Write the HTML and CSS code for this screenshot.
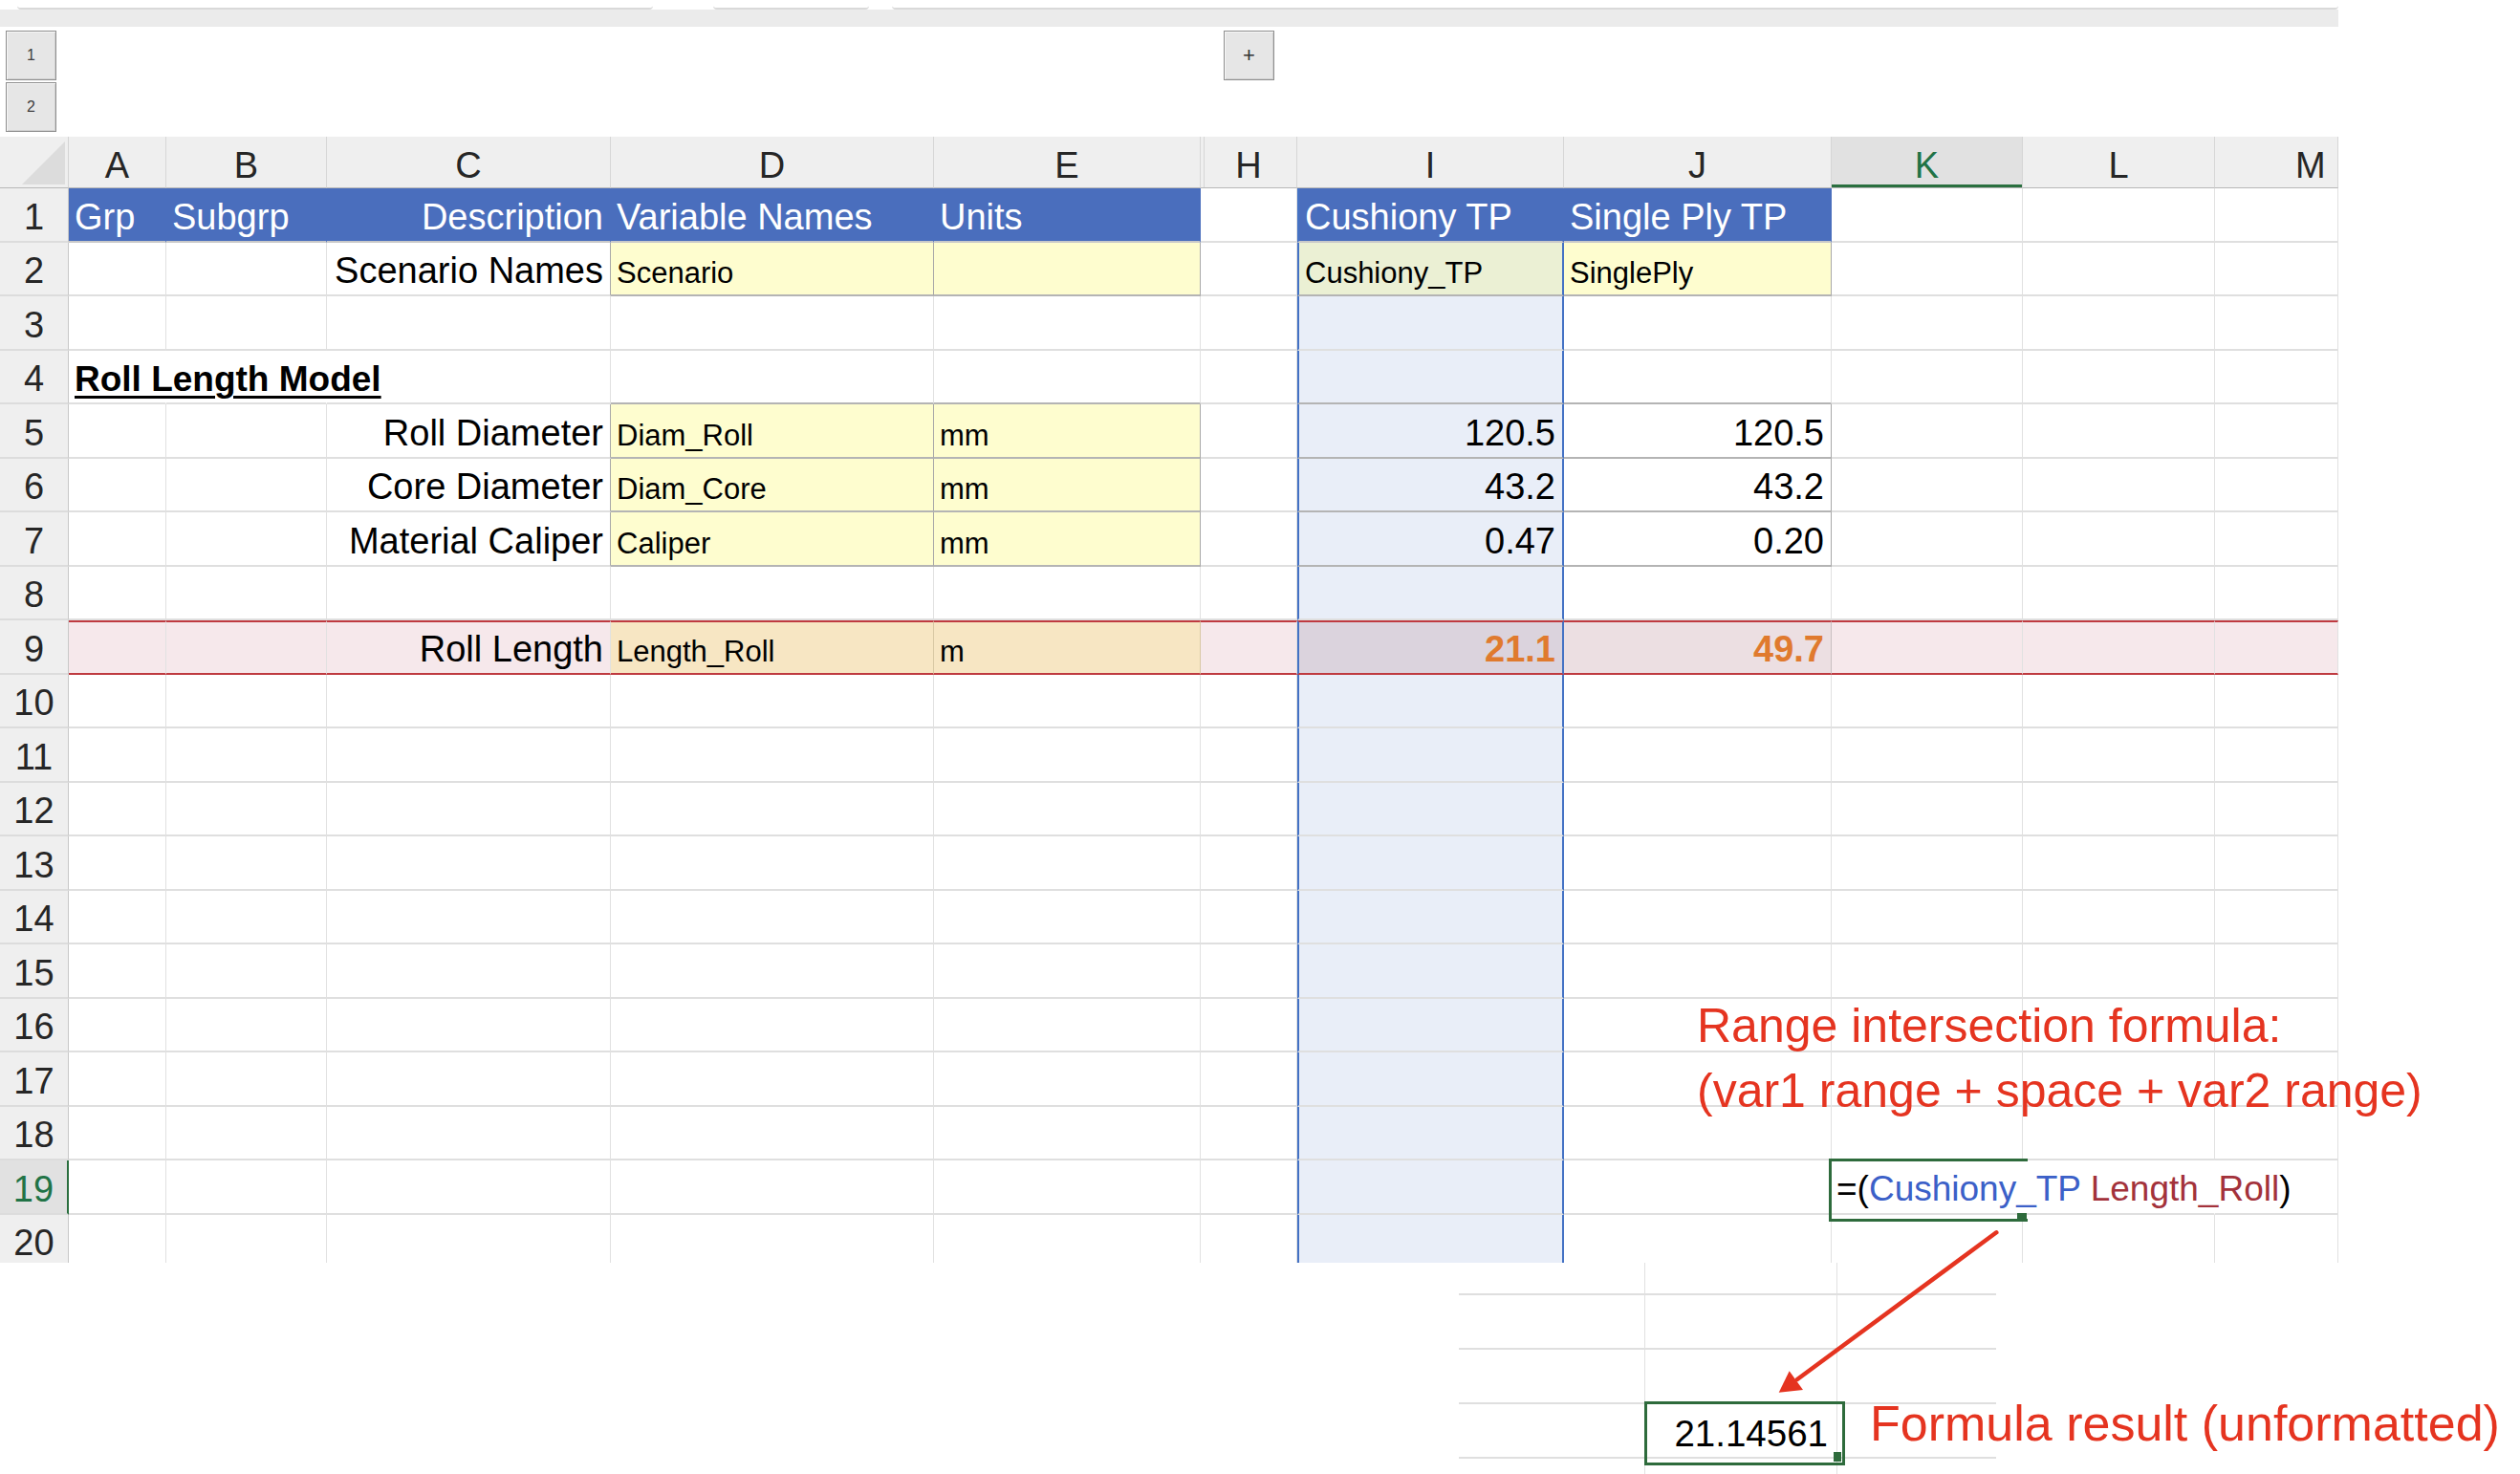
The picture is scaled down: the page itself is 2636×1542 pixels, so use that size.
FILE: index.html
```html
<!DOCTYPE html>
<html lang="en">
<head>
<meta charset="utf-8">
<title>Range intersection</title>
<link rel="stylesheet" href="styles.css">
</head>
<body>
<div class="app">
  <div class="topstrip"><div class="seg seg-a"></div><div class="seg seg-b"></div><div class="seg seg-c"></div></div>
  <div class="band"></div>
  <div class="outline">
    <div class="levels"><div class="obtn">1</div><div class="obtn">2</div></div>
    <div class="obtn expand">+</div>
  </div>

  <div class="sheet">
    <!-- column headers -->
    <div class="corner"><svg width="72" height="53" viewBox="0 0 72 53"><polygon points="23,50 68,50 68,5" fill="#dcdcdc"/></svg></div>
    <div class="c ch">A</div><div class="c ch">B</div><div class="c ch">C</div><div class="c ch">D</div><div class="c ch">E</div><div class="c ch chh">H</div><div class="c ch">I</div><div class="c ch">J</div><div class="c ch on">K</div><div class="c ch">L</div><div class="c ch chm">M</div>

    <!-- row 1 -->
    <div class="c rh">1</div>
    <div class="c hdr">Grp</div><div class="c hdr">Subgrp</div><div class="c hdr rt">Description</div><div class="c hdr">Variable Names</div><div class="c hdr hdr-end">Units</div>
    <div class="c"></div><div class="c ref hdr">Cushiony TP</div><div class="c hdr hdr-end">Single Ply TP</div><div class="c"></div><div class="c"></div><div class="c"></div>

    <!-- row 2 -->
    <div class="c rh">2</div>
    <div class="c"></div><div class="c"></div><div class="c rt bxl">Scenario Names</div><div class="c sm yel bx">Scenario</div><div class="c sm yel bx"></div>
    <div class="c"></div><div class="c sm bx ref yref">Cushiony_TP</div><div class="c sm yel bx">SinglePly</div><div class="c"></div><div class="c"></div><div class="c"></div>

    <!-- row 3 -->
    <div class="c rh">3</div>
    <div class="c"></div><div class="c"></div><div class="c"></div><div class="c"></div><div class="c"></div>
    <div class="c"></div><div class="c ref"></div><div class="c"></div><div class="c"></div><div class="c"></div><div class="c"></div>

    <!-- row 4 -->
    <div class="c rh">4</div>
    <div class="c nr"><span class="title">Roll Length Model</span></div><div class="c nr"></div><div class="c"></div><div class="c bxt"></div><div class="c bxt"></div>
    <div class="c"></div><div class="c ref bxt"></div><div class="c bxt"></div><div class="c"></div><div class="c"></div><div class="c"></div>

    <!-- row 5 -->
    <div class="c rh">5</div>
    <div class="c"></div><div class="c"></div><div class="c rt bxl">Roll Diameter</div><div class="c sm yel bx">Diam_Roll</div><div class="c sm yel bx">mm</div>
    <div class="c"></div><div class="c rt bx ref">120.5</div><div class="c rt bx">120.5</div><div class="c"></div><div class="c"></div><div class="c"></div>

    <!-- row 6 -->
    <div class="c rh">6</div>
    <div class="c"></div><div class="c"></div><div class="c rt bxl">Core Diameter</div><div class="c sm yel bx">Diam_Core</div><div class="c sm yel bx">mm</div>
    <div class="c"></div><div class="c rt bx ref">43.2</div><div class="c rt bx">43.2</div><div class="c"></div><div class="c"></div><div class="c"></div>

    <!-- row 7 -->
    <div class="c rh">7</div>
    <div class="c"></div><div class="c"></div><div class="c rt bxl">Material Caliper</div><div class="c sm yel bx">Caliper</div><div class="c sm yel bx">mm</div>
    <div class="c"></div><div class="c rt bx ref">0.47</div><div class="c rt bx">0.20</div><div class="c"></div><div class="c"></div><div class="c"></div>

    <!-- row 8 -->
    <div class="c rh">8</div>
    <div class="c"></div><div class="c"></div><div class="c"></div><div class="c"></div><div class="c"></div>
    <div class="c"></div><div class="c ref"></div><div class="c"></div><div class="c"></div><div class="c"></div><div class="c"></div>

    <!-- row 9 -->
    <div class="c rh">9</div>
    <div class="c r9"></div><div class="c r9"></div><div class="c rt r9">Roll Length</div><div class="c sm r9 peach">Length_Roll</div><div class="c sm r9 peach">m</div>
    <div class="c r9"></div><div class="c rt org ref r9 i9">21.1</div><div class="c rt org r9 j9">49.7</div><div class="c r9"></div><div class="c r9"></div><div class="c r9"></div>

    <!-- row 10 -->
    <div class="c rh">10</div>
    <div class="c"></div><div class="c"></div><div class="c"></div><div class="c"></div><div class="c"></div>
    <div class="c"></div><div class="c ref"></div><div class="c"></div><div class="c"></div><div class="c"></div><div class="c"></div>

    <!-- row 11 -->
    <div class="c rh">11</div>
    <div class="c"></div><div class="c"></div><div class="c"></div><div class="c"></div><div class="c"></div>
    <div class="c"></div><div class="c ref"></div><div class="c"></div><div class="c"></div><div class="c"></div><div class="c"></div>

    <!-- row 12 -->
    <div class="c rh">12</div>
    <div class="c"></div><div class="c"></div><div class="c"></div><div class="c"></div><div class="c"></div>
    <div class="c"></div><div class="c ref"></div><div class="c"></div><div class="c"></div><div class="c"></div><div class="c"></div>

    <!-- row 13 -->
    <div class="c rh">13</div>
    <div class="c"></div><div class="c"></div><div class="c"></div><div class="c"></div><div class="c"></div>
    <div class="c"></div><div class="c ref"></div><div class="c"></div><div class="c"></div><div class="c"></div><div class="c"></div>

    <!-- row 14 -->
    <div class="c rh">14</div>
    <div class="c"></div><div class="c"></div><div class="c"></div><div class="c"></div><div class="c"></div>
    <div class="c"></div><div class="c ref"></div><div class="c"></div><div class="c"></div><div class="c"></div><div class="c"></div>

    <!-- row 15 -->
    <div class="c rh">15</div>
    <div class="c"></div><div class="c"></div><div class="c"></div><div class="c"></div><div class="c"></div>
    <div class="c"></div><div class="c ref"></div><div class="c"></div><div class="c"></div><div class="c"></div><div class="c"></div>

    <!-- row 16 -->
    <div class="c rh">16</div>
    <div class="c"></div><div class="c"></div><div class="c"></div><div class="c"></div><div class="c"></div>
    <div class="c"></div><div class="c ref"></div><div class="c"></div><div class="c"></div><div class="c"></div><div class="c"></div>

    <!-- row 17 -->
    <div class="c rh">17</div>
    <div class="c"></div><div class="c"></div><div class="c"></div><div class="c"></div><div class="c"></div>
    <div class="c"></div><div class="c ref"></div><div class="c"></div><div class="c"></div><div class="c"></div><div class="c"></div>

    <!-- row 18 -->
    <div class="c rh">18</div>
    <div class="c"></div><div class="c"></div><div class="c"></div><div class="c"></div><div class="c"></div>
    <div class="c"></div><div class="c ref"></div><div class="c"></div><div class="c"></div><div class="c"></div><div class="c"></div>

    <!-- row 19 -->
    <div class="c rh on">19</div>
    <div class="c"></div><div class="c"></div><div class="c"></div><div class="c"></div><div class="c"></div>
    <div class="c"></div><div class="c ref"></div><div class="c"></div>
    <div class="c nr active"><span class="formula">=(<span class="f-blue">Cushiony_TP</span> <span class="f-red">Length_Roll</span>)</span></div><div class="c nr"></div><div class="c"></div>

    <!-- row 20 -->
    <div class="c rh">20</div>
    <div class="c"></div><div class="c"></div><div class="c"></div><div class="c"></div><div class="c"></div>
    <div class="c"></div><div class="c ref"></div><div class="c"></div><div class="c"></div><div class="c"></div><div class="c"></div>
  </div>

  <div class="callout">
    <div>Range intersection formula:</div>
    <div>(var1 range + space + var2 range)</div>
  </div>

  <div class="snip">
    <div class="s"></div><div class="s"></div><div class="s s-last"></div>
    <div class="s"></div><div class="s"></div><div class="s s-last"></div>
    <div class="s"></div><div class="s"></div><div class="s s-last"></div>
    <div class="s"></div><div class="s res">21.14561</div><div class="s s-last"></div>
    <div class="s s-end"></div><div class="s s-end"></div><div class="s s-last s-end"></div>
  </div>

  <div class="note">Formula result (unformatted)</div>

  <svg class="arrow" width="250" height="190" viewBox="0 0 250 190">
    <line x1="238.3" y1="9.3" x2="30" y2="163" stroke="#e53420" stroke-width="4.5" stroke-linecap="round"/>
    <polygon points="10.7,176.7 21.7,154.3 36,174" fill="#e53420"/>
  </svg>
</div>
</body>
</html>
```

FILE: styles.css
```css
* { box-sizing: border-box; }

body {
  margin: 0;
  background: #ffffff;
  font-family: "Liberation Sans", Arial, sans-serif;
  color: #000;
}

.app {
  --cols: 72px 102px 168px 297px 338px 279px 101px 279px 280px 200px 201px 129px;
  position: relative;
  width: 2636px;
  height: 1542px;
  overflow: hidden;
  background: #fff;
}

/* top chrome */
.topstrip { display: flex; height: 10px; width: 2446px; }
.seg { border-bottom: 2px solid #d9d9d9; border-radius: 0 0 4px 4px; }
.seg-a { margin-left: 18px; width: 665px; }
.seg-b { margin-left: 63px; width: 163px; }
.seg-c { margin-left: 24px; flex: 1; }
.band { height: 18px; width: 2446px; background: #ebebeb; }

/* outline / grouping area */
.outline {
  display: grid;
  grid-template-columns: var(--cols);
  height: 115px;
  width: 2446px;
}
.levels {
  display: flex;
  flex-direction: column;
  gap: 2px;
  padding: 4px 0 0 6px;
}
.obtn {
  width: 53px;
  height: 52px;
  background: #e6e6e6;
  border: 1px solid #8e8e8e;
  box-shadow: inset 1px 1px 0 #f7f7f7, inset -1px -1px 0 #cfcfcf;
  display: flex;
  align-items: center;
  justify-content: center;
  font-size: 16px;
  color: #404040;
}
.expand {
  grid-column: 7;
  justify-self: center;
  align-self: start;
  margin-top: 4px;
  font-size: 22px;
  color: #333;
}

/* sheet grid */
.sheet {
  display: grid;
  grid-template-columns: var(--cols);
  grid-template-rows: 54px repeat(20, 56.5px);
  width: 2446px;
  height: 1178px;
  overflow: hidden;
}

.c {
  display: flex;
  align-items: flex-end;
  padding: 0 7px 2px 6px;
  border-right: 1px solid #e1e1e1;
  border-bottom: 2px solid #dfdfdf;
  font-size: 38px;
  line-height: 1.15;
  white-space: nowrap;
  min-width: 0;
}
.rt { justify-content: flex-end; }
.sm { font-size: 31px; padding-bottom: 4px; }
.nr { border-right-color: transparent; }

.corner {
  background: #efefef;
  border-right: 1px solid #d4d4d4;
  border-bottom: 1px solid #b8b8b8;
}
.corner svg { display: block; }

.ch {
  background: #efefef;
  justify-content: center;
  color: #262626;
  border-right: 1px solid #d6d6d6;
  border-bottom: 1px solid #b8b8b8;
  padding: 0;
}
.chh { box-shadow: inset 3px 0 0 #efefef, inset 4px 0 0 #d6d6d6; }
.chm { justify-content: flex-start; padding-left: 84px; }
.ch.on {
  background: #e1e1e1;
  color: #217346;
  box-shadow: inset 0 -3px 0 #2a6f3f;
}

.rh {
  background: #efefef;
  justify-content: center;
  color: #262626;
  border-right: 1px solid #c8c8c8;
  border-bottom: 2px solid #dcdcdc;
  padding: 0 0 2px;
}
.rh.on {
  background: #e1e1e1;
  color: #217346;
  border-right: 2px solid #2a6f3f;
}

/* boxes and fills */
.bx { border-right: 1px solid #a8a8a8; border-bottom: 2px solid #b4b4b4; }
.bxt { border-bottom-color: #b4b4b4; }
.bxl { border-right-color: #a8a8a8; }

.ref {
  border-left: 2px solid #4472c4;
  border-right: 2px solid #4472c4;
  background: #e9eef8;
}

.hdr {
  background: #4a6ebd;
  color: #fff;
  border-right-color: #4a6ebd;
  border-bottom-color: #c9c9c9;
}
.hdr-end { border-right-color: #4a6ebd; }

.yel { background: #fefdcf; }
.yref { background: #ebf0d4; }

.r9 {
  background: #f6e8eb;
  border-top: 2px solid #bf3a40;
  border-bottom: 2px solid #bf3a40;
}
.peach { background: #f7e6c3; border-right-color: #d8c8a4; }
.i9 { background: #dbd3dd; }
.j9 { background: #ecdfe2; border-right-color: #c9bfc1; }
.org { color: #e07a2e; font-weight: bold; }

.title {
  font-weight: bold;
  font-size: 37px;
  text-decoration: underline;
  text-decoration-thickness: 3px;
  text-underline-offset: 5px;
}

/* active cell with overflowing formula */
.active {
  position: relative;
  z-index: 2;
  font-size: 37px;
  padding-left: 5px;
  padding-bottom: 3px;
}
.active::after {
  content: "";
  position: absolute;
  left: -3px;
  top: -2px;
  width: 205px;
  height: 60px;
  border: 3px solid #2e6b3c;
  border-right: 0;
}
.active::before {
  content: "";
  position: absolute;
  left: 194px;
  top: 55px;
  width: 10px;
  height: 7px;
  background: #2e6b3c;
}
.formula { white-space: pre; }
.f-blue { color: #3b60c8; }
.f-red { color: #a3323b; }

/* annotations */
.callout {
  position: absolute;
  left: 1775px;
  top: 1039px;
  font-size: 50px;
  line-height: 68px;
  color: #e53420;
  white-space: nowrap;
}
.note {
  position: absolute;
  left: 1956px;
  top: 1455px;
  font-size: 52px;
  line-height: 68px;
  color: #e53420;
  white-space: nowrap;
}

/* pasted result snippet */
.snip {
  position: absolute;
  left: 1526px;
  top: 1321px;
  width: 562px;
  height: 221px;
  display: grid;
  grid-template-columns: 195px 201px 166px;
  grid-template-rows: 34px 57px 57px 57px 16px;
  background: #fff;
}
.s {
  border-right: 1px solid #e1e1e1;
  border-bottom: 2px solid #dfdfdf;
}
.s-last { border-right: 0; }
.s-end { border-bottom: 0; }
.res {
  position: relative;
  display: flex;
  align-items: flex-end;
  justify-content: flex-end;
  padding: 0 9px 2px 0;
  font-size: 38.5px;
  line-height: 1.15;
}
.res::after {
  content: "";
  position: absolute;
  left: -1px;
  top: -3px;
  width: 204px;
  height: 61px;
  border: 3px solid #2e6b3c;
}
.res::before {
  content: "";
  position: absolute;
  left: 197px;
  top: 50px;
  width: 8px;
  height: 10px;
  background: #2e6b3c;
}

.arrow {
  position: absolute;
  left: 1850px;
  top: 1280px;
}
```
